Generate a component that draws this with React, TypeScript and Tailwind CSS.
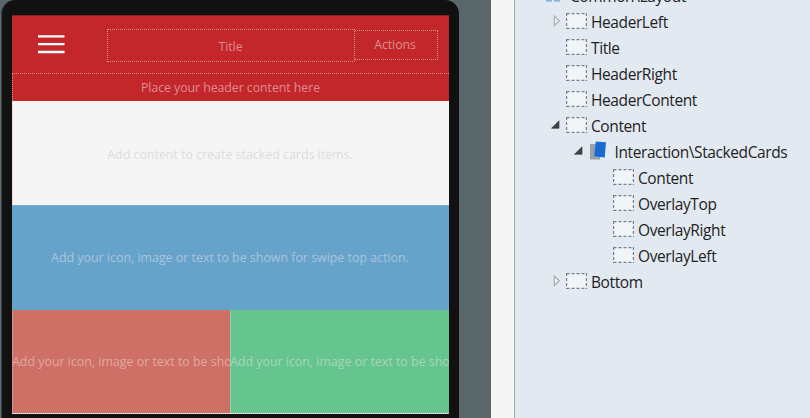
import type { ReactNode } from "react";

function Slot() {
  return (
    <svg className="block h-4 w-[21px] shrink-0" viewBox="0 0 21 16" fill="none">
      <rect x="0.5" y="0.5" width="20" height="15" fill="#f1f5f8" />
      <path d="M0 .6H21M0 15.4H21" stroke="#75818a" strokeWidth="1.2" strokeDasharray="3 2" strokeDashoffset="-.5" />
      <path d="M.6 0V16M20.4 0V16" stroke="#75818a" strokeWidth="1.2" strokeDasharray="3 2" />
    </svg>
  );
}

function Arrow({ open }: { open?: boolean }) {
  return (
    <svg className="block h-3 w-3 shrink-0" viewBox="0 0 12 12">
      {open ? (
        <path d="M8 1.8V9.3H.5Z" fill="#404244" stroke="#303234" strokeWidth=".6" />
      ) : (
        <path d="M3.3 1L8.3 5.8L3.3 10.5Z" fill="#eef1f4" stroke="#a9afb4" strokeWidth="1.2" />
      )}
    </svg>
  );
}

function Cards() {
  return (
    <svg className="block h-5 w-[18px] shrink-0" viewBox="0 0 18 20">
      <path d="M1 3H11V18.5H1Z" fill="#97a3a9" />
      <path d="M6.8 .5L17 1.2L15.7 16.5L5.2 15.2Z" fill="#176bd1" />
    </svg>
  );
}

function Row({ indent, arrow, icon, label, gap = "ml-1" }: { indent: string; arrow?: ReactNode; icon?: ReactNode; label: string; gap?: string }) {
  return (
    <div className={"flex h-[26px] items-center " + indent}>
      <div className="w-[15px] shrink-0">{arrow}</div>
      {icon ?? <Slot />}
      <span className={"whitespace-pre pt-[2px] " + gap}>{label}</span>
    </div>
  );
}

export default function App() {
  return (
    <div className="flex h-[418px] w-[810px] overflow-hidden bg-[#59666a] font-['Open_Sans','Noto_Sans',sans-serif]">
      <div className="ml-px h-[460px] w-[458px] shrink-0 rounded-t-[14px] border-l border-[#39454a] bg-[#111] px-[10px] pt-[15px]">
        <div className="w-[437px] bg-[#f5f5f5] text-[12.4px] font-medium leading-4">
          <div className="h-[86px] border-t border-[#8c2023] bg-[#c3272b] tracking-[-0.08px] text-[#df8c8e]">
            <div className="flex h-[57px] items-start">
              <svg className="ml-[25.5px] mt-[18px] h-5 w-[27px] shrink-0" viewBox="0 0 27 20">
                <path d="M0 2.4H26.5M0 10.1H26.5M0 18H26.5" stroke="#fff" strokeWidth="2.4" />
              </svg>
              <div className="ml-[42.5px] mt-[13px] flex h-[33px] w-[248px] items-center justify-center border border-dotted border-[#e39193] pr-px pt-[3px]">
                Title
              </div>
              <div className="mt-[14px] flex h-[30px] w-[83px] items-center justify-center border border-l-0 border-dotted border-[#e39193] pr-[2px]">
                Actions
              </div>
            </div>
            <div className="flex h-[28px] items-center justify-center border-l border-t border-dotted border-[#e39193] pr-px pt-px">
              Place your header content here
            </div>
          </div>
          <div className="flex h-[104px] items-center justify-center border-l border-dotted border-[#cfcfcf] pr-[2px] pt-[3px] text-[#dcdcdc]">
            Add content to create stacked cards items.
          </div>
          <div className="flex h-[105px] items-center justify-center border-t border-[#73ade0] bg-[#66a3cb] pr-px text-[#a8c5d9]">
            Add your icon, image or text to be shown for swipe top action.
          </div>
          <div className="flex h-[104px] border-b border-dotted border-[#c5c5c5]">
            <div className="flex w-[218px] items-center overflow-hidden whitespace-nowrap border-l border-dotted border-[#dfb0aa] bg-[#cf7066] text-[#dfa8a2]">
              <span className="-ml-px">Add your icon, image or text to be shown for swipe right action.</span>
            </div>
            <div className="flex w-[219px] items-center overflow-hidden whitespace-nowrap border-l border-dotted border-[#b6dec6] bg-[#66c48e] text-[#a4d8b8]">
              <span className="-ml-px">Add your icon, image or text to be shown for swipe left action.</span>
            </div>
          </div>
        </div>
      </div>
      <div className="ml-[32px] w-[23px] shrink-0 bg-[#f4f4f4]" />
      <div className="w-[296px] shrink-0 border-l border-[#a4a5a7] bg-[#e3e9f0] text-[15.5px] leading-[25px] tracking-[-0.4px] text-[#1f2225]">
        <div className="-mt-[18px]">
          <Row
            indent="pl-[16px]"
            icon={
              <svg className="h-[14px] w-[14px] shrink-0" viewBox="0 0 14 14" fill="#dceafb" stroke="#5b98df" strokeWidth="1.2">
                <path d="M1 1h4v4H1zM9 1h4v4H9zM1 9h4v4H1zM9 9h4v4H9z" />
              </svg>
            }
            label={"Common\\Layout"}
            gap="ml-[10px]"
          />
          <Row indent="pl-[36px]" arrow={<Arrow />} label="HeaderLeft" />
          <Row indent="pl-[36px]" label="Title" />
          <Row indent="pl-[36px]" label="HeaderRight" />
          <Row indent="pl-[36px]" label="HeaderContent" />
          <Row indent="pl-[36px]" arrow={<Arrow open />} label="Content" />
          <Row indent="pl-[59px]" arrow={<Arrow open />} icon={<Cards />} label={"Interaction\\StackedCards"} gap="ml-[7.5px]" />
          <Row indent="pl-[83px]" label="Content" />
          <Row indent="pl-[83px]" label="OverlayTop" />
          <Row indent="pl-[83px]" label="OverlayRight" />
          <Row indent="pl-[83px]" label="OverlayLeft" />
          <Row indent="pl-[36px]" arrow={<Arrow />} label="Bottom" />
        </div>
      </div>
    </div>
  );
}
